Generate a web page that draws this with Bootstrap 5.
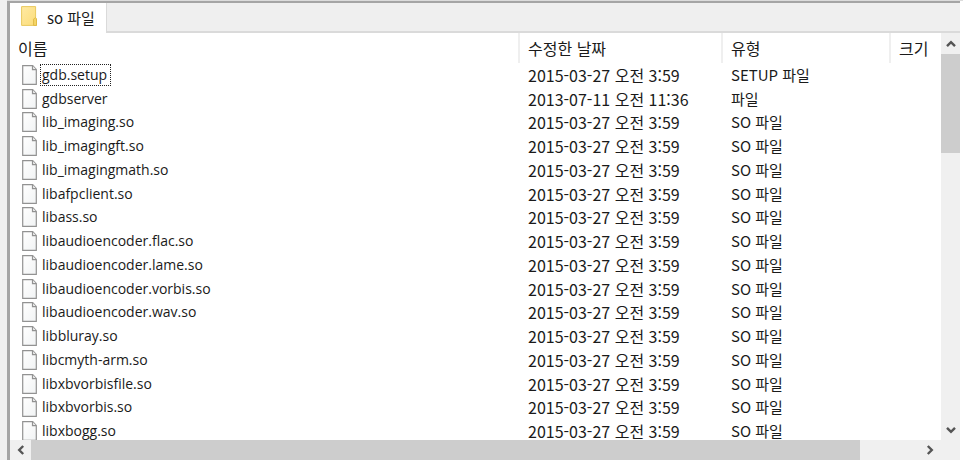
<!DOCTYPE html>
<html lang="ko">
<head>
<meta charset="utf-8">
<meta name="viewport" content="width=device-width, initial-scale=1">
<title>so 파일</title>
<link rel="stylesheet" href="https://cdn.jsdelivr.net/npm/bootstrap@5.3.0/dist/css/bootstrap.min.css">
<style>
body { font-family: "Noto Sans CJK KR", sans-serif; font-size: 16px; line-height: 20px; color: #1a1a1a; background: #fff; }
.gutter { width: 7px; background: #f0f0f0; }
.pane { border-top: 2px solid #a5a5a5; border-left: 3px solid #a5a5a5; margin-right: 3px; }
.top-edge { height: 1px; background: #dcdcdc; }
.tab-strip { background: #efefef; border-bottom: 2px solid #dadada; height: 30px; }
.tab-item { border: 0; border-right: 1px solid #dadada; background: #fff; color: inherit; padding: 0 11px; gap: 10px; font-size: 15px; margin-bottom: -2px; }
.tab-item svg { margin-bottom: 5px; }
.file-table { height: 410px; width: 100%; border-collapse: separate; border-spacing: 0; table-layout: fixed; }
.file-table th { height: 30px; font-weight: 400; border-right: 2px solid #efefef; }
.file-table th:last-child { border-right: 0; }
.file-table th, .file-table td { padding: 0 8px; white-space: nowrap; vertical-align: middle; line-height: 16px; }
.file-table tbody th { height: auto; border: 0; padding-left: 12px; font: 14px/20px "Open Sans", "Noto Sans CJK KR", sans-serif; }
.file-table .kind { font-size: 15px; }
.col-date { width: 203px; }
.col-kind { width: 168px; }
.col-size { width: 50px; }
.file-link { color: inherit; text-decoration: none; gap: 4px; }
.file-link span { padding: 0 1px; }
.file-link .picked { outline: 1px dotted #222; padding-right: 3px; }
.scroll { background: #f0f0f0; }
.scroll-v { width: 19px; }
.scroll-h { height: 20px; }
.scroll-btn { border: 0; padding: 0; background: transparent; width: 21px; height: 21px; }
.scroll-v .scroll-btn { width: 19px; }
.scroll-h .scroll-btn { height: 20px; }
.scroll-h .scroll-btn:last-child { margin-right: 20px; }
.thumb { background: #cdcdcd; }
.scroll-v .thumb { height: 27%; }
.scroll-h .thumb { width: 93.3%; }
</style>
<script src="https://cdn.jsdelivr.net/npm/bootstrap@5.3.0/dist/js/bootstrap.bundle.min.js"></script>
</head>
<body class="vh-100 d-flex overflow-hidden">
<svg width="0" height="0" class="position-absolute" aria-hidden="true">
  <defs>
    <linearGradient id="paper" x1="0" y1="0" x2="1" y2="1"><stop offset="0" stop-color="#fff"/><stop offset="1" stop-color="#f1f3f4"/></linearGradient>
    <linearGradient id="manila" x1="0" y1="0" x2="1" y2="1"><stop offset="0" stop-color="#ffeaa4"/><stop offset="1" stop-color="#fbdc78"/></linearGradient>
    <symbol id="doc" viewBox="0 0 15 20"><path d="M.7.7h10l3.6 3.8v14.8H.7z" fill="url(#paper)" stroke="#929292" stroke-width="1.2"/><path d="M10.5.7v4h3.8" fill="#eee" stroke="#929292" stroke-width="1.2"/></symbol>
    <symbol id="folder" viewBox="0 0 16 20"><path d="M.6.6h14v11.2l.9.9v6.7H.6z" fill="url(#manila)" stroke="#e9c95e"/><path d="M12.6 19.4v-6.2l1.6-1.6 1.3 1.3v6.5z" fill="#f6d567" stroke="#dfba47"/></symbol>
  </defs>
</svg>
<div class="gutter flex-shrink-0"></div>
<div class="flex-grow-1 d-flex flex-column">
  <div class="top-edge flex-shrink-0"></div>
  <main class="pane flex-grow-1 d-flex flex-column overflow-hidden">
    <div class="tab-strip d-flex flex-shrink-0" role="tablist">
      <button type="button" class="tab-item d-flex align-items-center" role="tab" aria-selected="true"><svg width="16" height="20" aria-hidden="true"><use href="#folder"/></svg>so 파일</button>
    </div>
    <div class="d-flex flex-grow-1 overflow-hidden">
      <div class="flex-grow-1 overflow-hidden">
        <table class="file-table">
          <colgroup><col><col class="col-date"><col class="col-kind"><col class="col-size"></colgroup>
          <thead><tr><th scope="col">이름</th><th scope="col">수정한 날짜</th><th scope="col">유형</th><th scope="col">크기</th></tr></thead>
          <tbody id="files"></tbody>
        </table>
      </div>
      <div class="scroll scroll-v d-flex flex-column flex-shrink-0">
        <button type="button" class="scroll-btn d-flex align-items-center justify-content-center flex-shrink-0" aria-label="위로"><svg width="10" height="8" viewBox="0 0 10 8"><path d="M1 6.2 5 2.2l4 4" fill="none" stroke="#555" stroke-width="2.4"/></svg></button>
        <div class="flex-grow-1"><div class="thumb"></div></div>
        <button type="button" class="scroll-btn d-flex align-items-center justify-content-center flex-shrink-0" aria-label="아래로"><svg width="10" height="8" viewBox="0 0 10 8"><path d="M1 1.8l4 4 4-4" fill="none" stroke="#555" stroke-width="2.4"/></svg></button>
      </div>
    </div>
    <div class="scroll scroll-h d-flex flex-shrink-0">
      <button type="button" class="scroll-btn d-flex align-items-center justify-content-center flex-shrink-0" aria-label="왼쪽으로"><svg width="8" height="10" viewBox="0 0 8 10"><path d="M6.2 1l-4 4 4 4" fill="none" stroke="#555" stroke-width="2.4"/></svg></button>
      <div class="flex-grow-1 d-flex"><div class="thumb"></div></div>
      <button type="button" class="scroll-btn d-flex align-items-center justify-content-center flex-shrink-0" aria-label="오른쪽으로"><svg width="8" height="10" viewBox="0 0 8 10"><path d="M1.8 1l4 4-4 4" fill="none" stroke="#555" stroke-width="2.4"/></svg></button>
    </div>
  </main>
</div>
<script>
const usual = '2015-03-27 오전 3:59';
const files = [['gdb.setup', usual, 'SETUP 파일'], ['gdbserver', '2013-07-11 오전 11:36', '파일']].concat(
  ['lib_imaging', 'lib_imagingft', 'lib_imagingmath', 'libafpclient', 'libass', 'libaudioencoder.flac', 'libaudioencoder.lame', 'libaudioencoder.vorbis', 'libaudioencoder.wav', 'libbluray', 'libcmyth-arm', 'libxbvorbisfile', 'libxbvorbis', 'libxbogg'].map(n => [n + '.so', usual, 'SO 파일']));
document.getElementById('files').innerHTML = files.map(([name, date, kind], i) =>
  `<tr><th scope="row"><a href="#" class="file-link d-flex align-items-center"><svg width="15" height="20" aria-hidden="true"><use href="#doc"/></svg><span class="${i ? '' : 'picked'}">${name}</span></a></th><td>${date}</td><td class="kind">${kind}</td><td></td></tr>`).join('');
</script>
</body>
</html>
